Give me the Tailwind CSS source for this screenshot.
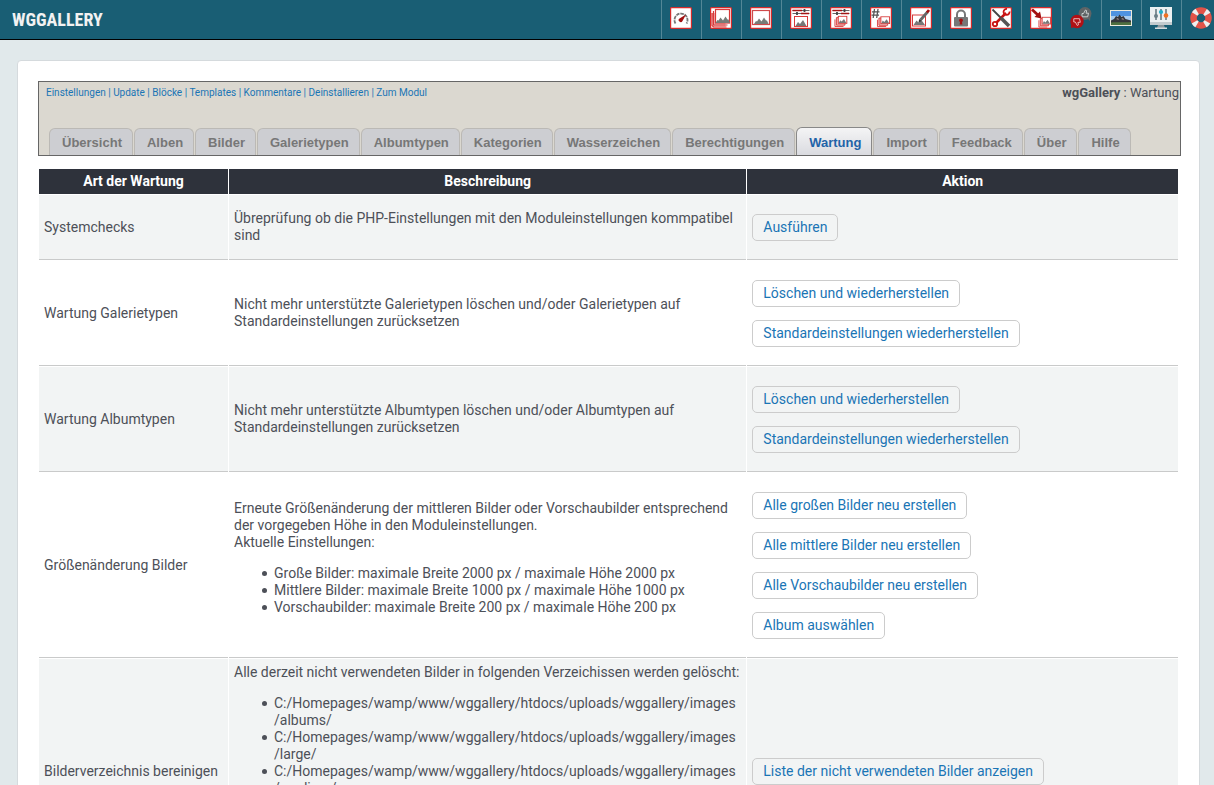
<!DOCTYPE html>
<html lang="de">
<head>
<meta charset="utf-8">
<title>wgGallery : Wartung</title>
<script src="https://cdn.jsdelivr.net/npm/@tailwindcss/browser@4"></script>
</head>
<body class="bg-[#e1e9eb] font-['Roboto',sans-serif] text-sm leading-[17px] text-[#4d5058]">
<svg class="hidden">
  <defs>
    <g id="frame"><rect x=".6" y=".6" width="20.8" height="20.8" rx="1" fill="#fff" stroke="#d62b2b" stroke-width="1.2"/></g>
    <g id="hills"><path d="M0 6.500 2 3.500l1 .5L5 1l2.500 3L10 0l2 3 1 0 1.500 3.500z" fill="#777c78"/></g>
    <g id="sliders"><path d="M2.500 3.500h17M2.500 6.500h17" stroke="#666" stroke-width="1"/><path d="M2.500 3.500H12M11 6.500h8" stroke="#a31515" stroke-width="1.600"/><path d="M14.500 2v3M7 5v3" stroke="#444" stroke-width="1.800"/></g>
    <g id="stack"><path d="M2.500 3v8.500h9V3z" fill="#f3b5b5" stroke="#d83a3a"/><path d="M1 5v8h9" fill="none" stroke="#d83a3a"/><rect x="4.500" y="1.500" width="9" height="8" fill="#fff" stroke="#d83a3a"/><path d="m5 9 1.500-3 1.500 1.500L10.500 4.500 13 9z" fill="#777"/></g>
  </defs>
</svg>

<header class="flex h-10 items-center justify-between overflow-hidden border-b border-black bg-[#195e74]">
  <h1 class="pl-3 font-['Roboto_Condensed',Roboto,sans-serif] text-lg font-bold text-[#f2f2f2]">WGGALLERY</h1>
  <nav aria-label="Module" class="-mr-[7px] flex h-full shrink-0">
    <a href="#" aria-label="Dashboard" class="flex w-10 items-start border-l border-[#538797] pt-[7px] pl-2"><svg class="size-[22px]" viewBox="0 0 22 22"><use href="#frame"/><path d="M5.500 16.500a6.500 6.500 0 1 1 11 0" fill="none" stroke="#777" stroke-width="1.800" stroke-dasharray="3.500 .8"/><path d="m16 7.500-3.500 6.500a2 2 0 1 1-3-2.500z" fill="#a31010"/></svg></a>
    <a href="#" aria-label="Alben" class="flex w-10 items-start border-l border-[#538797] pt-[7px] pl-2"><svg class="size-[22px]" viewBox="0 0 22 22"><use href="#frame"/><path d="M1.500 6h14v13.500h-12z" fill="#f3b5b5"/><path d="M3.500 4v14h14M2 6v12.500l1.500 1.500h13" fill="none" stroke="#d83a3a" stroke-width="1.200"/><rect x="5.500" y="2.500" width="14" height="13.500" fill="#fff" stroke="#d83a3a" stroke-width="1.200"/><use href="#hills" x="5.500" y="9.500"/></svg></a>
    <a href="#" aria-label="Bilder" class="flex w-10 items-start border-l border-[#538797] pt-[7px] pl-2"><svg class="size-[22px]" viewBox="0 0 22 22"><use href="#frame"/><rect x="2.500" y="3.500" width="17" height="14" fill="#fff" stroke="#cf4a4a" stroke-width="1.200"/><use href="#hills" x="4" y="10.500"/></svg></a>
    <a href="#" aria-label="Galerietypen" class="flex w-10 items-start border-l border-[#538797] pt-[7px] pl-2"><svg class="size-[22px]" viewBox="0 0 22 22"><use href="#frame"/><use href="#sliders"/><rect x="4.500" y="9.500" width="13" height="10" fill="#fff" stroke="#d83a3a"/><path d="m5.500 19 2.500-4 2 2 3-4 3.500 6z" fill="#777"/></svg></a>
    <a href="#" aria-label="Albumtypen" class="flex w-10 items-start border-l border-[#538797] pt-[7px] pl-2"><svg class="size-[22px]" viewBox="0 0 22 22"><use href="#frame"/><use href="#sliders"/><g transform="translate(4 8) scale(.95 .88)"><use href="#stack"/></g></svg></a>
    <a href="#" aria-label="Kategorien" class="flex w-10 items-start border-l border-[#538797] pt-[7px] pl-2"><svg class="size-[22px]" viewBox="0 0 22 22"><use href="#frame"/><path d="M4.500 2 3.200 11M8 2 6.700 11M2 4.800h7.500M1.500 8.200H9" stroke="#555" stroke-width="1.300"/><g transform="translate(6.500 8.500) scale(.97 .85)"><use href="#stack"/></g></svg></a>
    <a href="#" aria-label="Bearbeiten" class="flex w-10 items-start border-l border-[#538797] pt-[7px] pl-2"><svg class="size-[22px]" viewBox="0 0 22 22"><use href="#frame"/><rect x="2.500" y="8" width="13" height="11" fill="#fff" stroke="#d83a3a"/><path d="m3.500 18 3-4.500 2 2 2.500-3 4 5.500z" fill="#777"/><path d="m10.500 13 7-8" stroke="#666" stroke-width="2.800"/><path d="m17 5.500 2-2.500" stroke="#a31010" stroke-width="2.800"/><path d="m8.500 15.500.7-3.500 2.300 2z" fill="#333"/></svg></a>
    <a href="#" aria-label="Berechtigungen" class="flex w-10 items-start border-l border-[#538797] pt-[7px] pl-2"><svg class="size-[22px]" viewBox="0 0 22 22"><use href="#frame"/><path d="M7 11V7.500a4 4 0 0 1 8 0V11" fill="none" stroke="#777" stroke-width="2"/><rect x="4" y="10" width="14" height="9.500" rx="1" fill="#777"/><circle cx="11" cy="13.300" r="1.900" fill="#a31010"/><path d="M10.200 14h1.600l.6 3.500H9.600z" fill="#a31010"/></svg></a>
    <a href="#" aria-label="Wartung" class="flex w-10 items-start border-l border-[#538797] pt-[7px] pl-2"><svg class="size-[22px]" viewBox="0 0 22 22"><use href="#frame"/><path d="m6 16 10-10" stroke="#c81414" stroke-width="2.500"/><circle cx="5" cy="17" r="2.200" fill="none" stroke="#c81414" stroke-width="1.800"/><path d="M19.500 4.500a3 3 0 1 1-2.500-2.500" fill="none" stroke="#c81414" stroke-width="1.800"/><path d="m2.500 2.500 8.500 8.500" stroke="#444" stroke-width="1.800"/><path d="m11 11 8 8" stroke="#555" stroke-width="3.600"/></svg></a>
    <a href="#" aria-label="Import" class="flex w-10 items-start border-l border-[#538797] pt-[7px] pl-2"><svg class="size-[22px]" viewBox="0 0 22 22"><use href="#frame"/><path d="m2 2.500 6.500 6" stroke="#a31010" stroke-width="2.800"/><path d="m11.500 11.500-7-1.500L10 4.500z" fill="#a31010"/><g transform="translate(8 9) scale(.92 .85)"><use href="#stack"/></g></svg></a>
    <a href="#" aria-label="Feedback" class="flex w-10 items-start border-l border-[#538797] pt-[7px] pl-2"><svg class="size-[22px]" viewBox="0 0 22 22"><circle cx="15" cy="6.500" r="6.500" fill="#5f6466"/><path d="m17 11 3 3 .5-5z" fill="#5f6466"/><path d="M12 9.500V6.500h1.500l2-3.500 1.200.7-.6 2.500h2.400l-.8 3.600H12z" fill="none" stroke="#d5d8d8" stroke-width=".9"/><circle cx="7" cy="14.500" r="6.700" fill="#b01015"/><path d="M1 17v4l4-1z" fill="#b01015"/><path d="M3.800 12v3h1.500l2 3.500 1.200-.7-.6-2.500h2.400l-.8-3.600H3.800z" fill="none" stroke="#eec6c6" stroke-width=".9"/></svg></a>
    <a href="#" aria-label="Galerie" class="flex w-10 items-start border-l border-[#538797] pt-[7px] pl-2"><svg class="size-[22px]" viewBox="0 0 22 22"><path d="M0 3h22v16H0z" fill="#ece9dc"/><path d="M1 4h20v14H1z" fill="#4f93e0"/><path d="M1 9h20v5H1z" fill="#a9cdf0"/><path d="m1 13.500 3-1.500 2-3 2 1 1.500-2.500 2 2.500 2-1 2 3 5.500 1.500v3H1z" fill="#34363c"/><path d="m6 12 2-1 1 2zM11 12l2-1 1 2z" fill="#a88e86"/><path d="M1 15.500c6-1 13 .5 20-.5v3H1z" fill="#4f7040"/></svg></a>
    <a href="#" aria-label="Einstellungen" class="flex w-10 items-start border-l border-[#538797] pt-[7px] pl-2"><svg class="size-[22px]" viewBox="0 0 22 22"><path d="M0 0h22v16H0z" fill="#ecf0f1"/><path d="M0 15h22v3H0z" fill="#c3cbce"/><path d="M8 18h6l1 3H7z" fill="#8d999e"/><path d="M5 20.500h12v1.500H5z" fill="#d5dcde"/><path d="M6 2v11M11 2v11M16 2v11" stroke="#566a72" stroke-width="1.400"/><circle cx="6" cy="9" r="2" fill="#6a7f87"/><circle cx="11" cy="5" r="2.100" fill="#1faecb"/><circle cx="16" cy="8.500" r="2.300" fill="#f37021"/></svg></a>
    <a href="#" aria-label="Hilfe" class="flex w-10 items-start border-l border-[#538797] pt-[7px] pl-2"><svg class="size-[22px]" viewBox="0 0 22 22"><circle cx="11" cy="11" r="7.500" fill="none" stroke="#e25349" stroke-width="6.500"/><circle cx="11" cy="11" r="7.500" fill="none" stroke="#edf0f0" stroke-width="6.500" stroke-dasharray="3.600 8.180" stroke-dashoffset="-4.090"/></svg></a>
  </nav>
</header>

<main class="mt-5 mr-[14px] ml-[17px] rounded-sm border border-[#d5dadd] bg-white p-5">
  <div class="-mr-[2px] border border-[#666] bg-[#dbd8d0]">
    <div class="flex items-start justify-between pt-[2px] pl-[7px]">
      <p class="text-[10px] text-[#1a75b5]"><a href="#">Einstellungen</a> | <a href="#">Update</a> | <a href="#">Blöcke</a> | <a href="#">Templates</a> | <a href="#">Kommentare</a> | <a href="#">Deinstallieren</a> | <a href="#">Zum Modul</a></p>
      <p class="pr-px text-[13px]"><b>wgGallery</b> : Wartung</p>
    </div>
    <nav aria-label="Verwaltung" class="mt-[26px] flex items-start gap-px pl-[10px] font-['Liberation_Sans',Arial,sans-serif] text-[13px] font-bold text-[#777]">
      <a href="#" class="mt-px h-[27px] rounded-t-md border border-b-0 border-[#bbb9b5] bg-[#cdced2] pt-[5px] pr-[10px] pl-3">Übersicht</a>
      <a href="#" class="mt-px h-[27px] rounded-t-md border border-b-0 border-[#bbb9b5] bg-[#cdced2] pt-[5px] pr-[10px] pl-3">Alben</a>
      <a href="#" class="mt-px h-[27px] rounded-t-md border border-b-0 border-[#bbb9b5] bg-[#cdced2] pt-[5px] pr-[10px] pl-3">Bilder</a>
      <a href="#" class="mt-px h-[27px] rounded-t-md border border-b-0 border-[#bbb9b5] bg-[#cdced2] pt-[5px] pr-[10px] pl-3">Galerietypen</a>
      <a href="#" class="mt-px h-[27px] rounded-t-md border border-b-0 border-[#bbb9b5] bg-[#cdced2] pt-[5px] pr-[10px] pl-3">Albumtypen</a>
      <a href="#" class="mt-px h-[27px] rounded-t-md border border-b-0 border-[#bbb9b5] bg-[#cdced2] pt-[5px] pr-[10px] pl-3">Kategorien</a>
      <a href="#" class="mt-px h-[27px] rounded-t-md border border-b-0 border-[#bbb9b5] bg-[#cdced2] pt-[5px] pr-[10px] pl-3">Wasserzeichen</a>
      <a href="#" class="mt-px h-[27px] rounded-t-md border border-b-0 border-[#bbb9b5] bg-[#cdced2] pt-[5px] pr-[10px] pl-3">Berechtigungen</a>
      <a href="#" aria-current="page" class="h-7 rounded-t-md border border-b-0 border-[#888] bg-linear-to-b from-[#f4f4f5] to-[#dadbe0] pt-[6px] pr-[10px] pl-3 text-[#1f63a8]">Wartung</a>
      <a href="#" class="mt-px h-[27px] rounded-t-md border border-b-0 border-[#bbb9b5] bg-[#cdced2] pt-[5px] pr-[10px] pl-3">Import</a>
      <a href="#" class="mt-px h-[27px] rounded-t-md border border-b-0 border-[#bbb9b5] bg-[#cdced2] pt-[5px] pr-[10px] pl-3">Feedback</a>
      <a href="#" class="mt-px h-[27px] rounded-t-md border border-b-0 border-[#bbb9b5] bg-[#cdced2] pt-[5px] pr-[10px] pl-3">Über</a>
      <a href="#" class="mt-px h-[27px] rounded-t-md border border-b-0 border-[#bbb9b5] bg-[#cdced2] pt-[5px] pr-[10px] pl-3">Hilfe</a>
    </nav>
  </div>

  <table class="mt-3 w-full table-fixed border-separate border-spacing-px">
    <colgroup><col class="w-[189px]"><col class="w-[45.5%]"><col></colgroup>
    <thead class="bg-[#2e323b] text-white">
      <tr><th class="py-1 font-bold">Art der Wartung</th><th class="py-1 font-bold">Beschreibung</th><th class="py-1 font-bold">Aktion</th></tr>
    </thead>
    <tbody class="[&_li]:flex [&_li]:before:mt-[6px] [&_li]:before:mr-[7px] [&_li]:before:size-[5px] [&_li]:before:shrink-0 [&_li]:before:rounded-full [&_li]:before:bg-current [&_li]:before:content-[''] [&_td]:border-b [&_td]:border-[#c9caca] [&_td]:px-[5px]">
      <tr class="bg-[#f2f4f4]">
        <td>Systemchecks</td>
        <td>Übreprüfung ob die PHP-Einstellungen mit den Moduleinstellungen kommpatibel sind</td>
        <td class="pt-[19px] pb-[18px]"><div class="flex flex-col items-start gap-[13px]"><button class="rounded-[5px] border border-[#ccc] px-[10px] py-1 text-[#1a75b5]">Ausführen</button></div></td>
      </tr>
      <tr>
        <td>Wartung Galerietypen</td>
        <td>Nicht mehr unterstützte Galerietypen löschen und/oder Galerietypen auf Standardeinstellungen zurücksetzen</td>
        <td class="pt-[19px] pb-[18px]"><div class="flex flex-col items-start gap-[13px]"><button class="rounded-[5px] border border-[#ccc] px-[10px] py-1 text-[#1a75b5]">Löschen und wiederherstellen</button><button class="rounded-[5px] border border-[#ccc] px-[10px] py-1 text-[#1a75b5]">Standardeinstellungen wiederherstellen</button></div></td>
      </tr>
      <tr class="bg-[#f2f4f4]">
        <td>Wartung Albumtypen</td>
        <td>Nicht mehr unterstützte Albumtypen löschen und/oder Albumtypen auf Standardeinstellungen zurücksetzen</td>
        <td class="pt-[19px] pb-[18px]"><div class="flex flex-col items-start gap-[13px]"><button class="rounded-[5px] border border-[#ccc] px-[10px] py-1 text-[#1a75b5]">Löschen und wiederherstellen</button><button class="rounded-[5px] border border-[#ccc] px-[10px] py-1 text-[#1a75b5]">Standardeinstellungen wiederherstellen</button></div></td>
      </tr>
      <tr>
        <td>Größenänderung Bilder</td>
        <td>Erneute Größenänderung der mittleren Bilder oder Vorschaubilder entsprechend der vorgegeben Höhe in den Moduleinstellungen.<br>Aktuelle Einstellungen:
          <ul class="my-[14px] pl-7"><li>Große Bilder: maximale Breite 2000 px / maximale Höhe 2000 px</li><li>Mittlere Bilder: maximale Breite 1000 px / maximale Höhe 1000 px</li><li>Vorschaubilder: maximale Breite 200 px / maximale Höhe 200 px</li></ul></td>
        <td class="pt-[19px] pb-[18px]"><div class="flex flex-col items-start gap-[13px]"><button class="rounded-[5px] border border-[#ccc] px-[10px] py-1 text-[#1a75b5]">Alle großen Bilder neu erstellen</button><button class="rounded-[5px] border border-[#ccc] px-[10px] py-1 text-[#1a75b5]">Alle mittlere Bilder neu erstellen</button><button class="rounded-[5px] border border-[#ccc] px-[10px] py-1 text-[#1a75b5]">Alle Vorschaubilder neu erstellen</button><button class="rounded-[5px] border border-[#ccc] px-[10px] py-1 text-[#1a75b5]">Album auswählen</button></div></td>
      </tr>
      <tr class="bg-[#f2f4f4]">
        <td>Bilderverzeichnis bereinigen</td>
        <td class="py-[5px]">Alle derzeit nicht verwendeten Bilder in folgenden Verzeichissen werden gelöscht:
          <ul class="my-[14px] pl-7"><li><span>C:/Homepages/wamp/www/wggallery/htdocs/uploads/wggallery/images<br>/albums/</span></li><li><span>C:/Homepages/wamp/www/wggallery/htdocs/uploads/wggallery/images<br>/large/</span></li><li><span>C:/Homepages/wamp/www/wggallery/htdocs/uploads/wggallery/images<br>/medium/</span></li><li><span>C:/Homepages/wamp/www/wggallery/htdocs/uploads/wggallery/images<br>/thumbs/</span></li><li><span>C:/Homepages/wamp/www/wggallery/htdocs/uploads/wggallery/images<br>/temp/</span></li></ul></td>
        <td><button class="rounded-[5px] border border-[#ccc] px-[10px] py-1 text-[#1a75b5]">Liste der nicht verwendeten Bilder anzeigen</button></td>
      </tr>
    </tbody>
  </table>
</main>
</body>
</html>
